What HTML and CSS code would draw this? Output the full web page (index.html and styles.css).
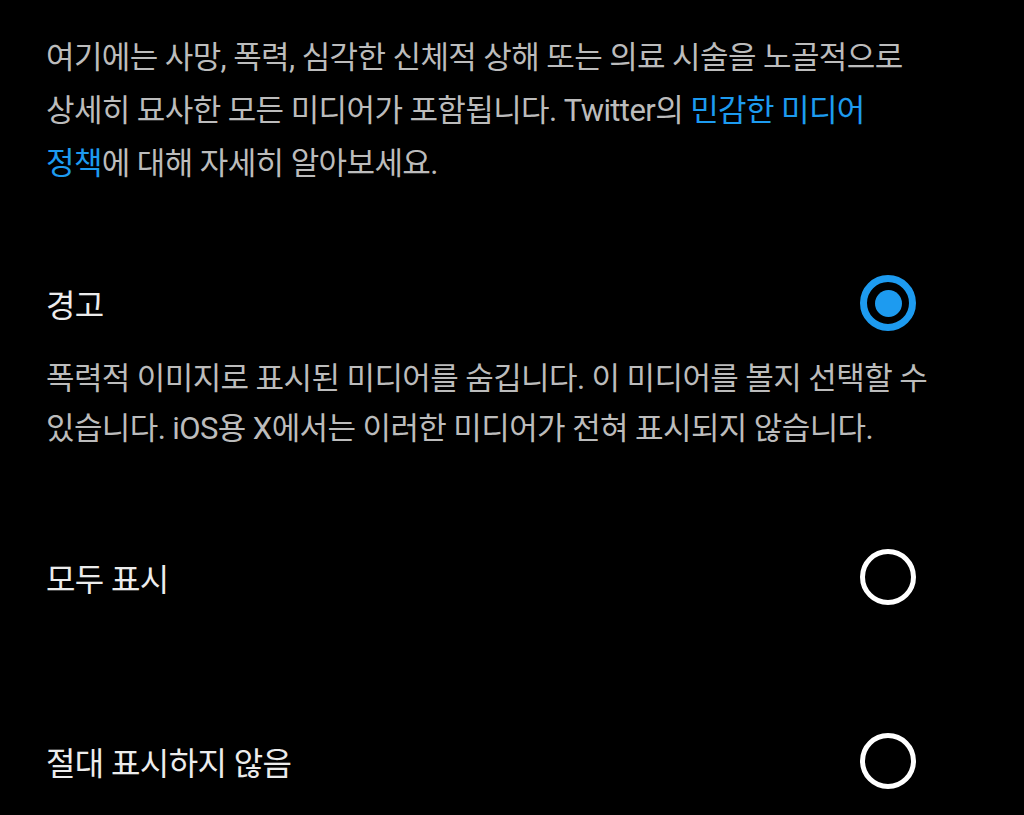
FILE: index.html
```
<!DOCTYPE html>
<html lang="ko">
<head>
<meta charset="utf-8">
<link rel="stylesheet" href="styles.css">
</head>
<body>
<main class="page">
  <p class="intro">여기에는 사망, 폭력, 심각한 신체적 상해 또는 의료 시술을 노골적으로 상세히 묘사한 모든 미디어가 포함됩니다. Twitter의 <a class="link" href="#">민감한 미디어 정책</a>에 대해 자세히 알아보세요.</p>

  <div class="option option-first">
    <div class="row">
      <span class="title">경고</span>
      <span class="radio radio-on"></span>
    </div>
    <p class="desc">폭력적 이미지로 표시된 미디어를 숨깁니다. 이 미디어를 볼지 선택할 수 있습니다. iOS용 X에서는 이러한 미디어가 전혀 표시되지 않습니다.</p>
  </div>

  <div class="option option-second">
    <div class="row">
      <span class="title">모두 표시</span>
      <span class="radio"></span>
    </div>
  </div>

  <div class="option option-third">
    <div class="row">
      <span class="title">절대 표시하지 않음</span>
      <span class="radio"></span>
    </div>
  </div>
</main>
</body>
</html>
```

FILE: styles.css
```
html, body {
  margin: 0;
  padding: 0;
  background: #000;
}
body {
  font-family: Roboto, "Noto Sans CJK KR", sans-serif;
  font-size: 31px;
  letter-spacing: -0.6px;
  color: #bcbcbc;
  height: 815px;
  overflow: hidden;
  word-break: keep-all;
}
.page {
  padding: 31px 78px 0 46px;
}
.intro {
  margin: 0;
  width: 900px;
  line-height: 53px;
}
.link {
  color: #1d9bf0;
  text-decoration: none;
}
.option {
  width: 870px;
}
.option-first { margin-top: 85px; }
.option-second { margin-top: 95px; }
.option-third { margin-top: 128px; }
.row {
  display: flex;
  align-items: center;
  justify-content: space-between;
  height: 56px;
}
.title {
  color: #ececec;
  font-size: 32px;
}
.radio {
  box-sizing: border-box;
  width: 56px;
  height: 56px;
  border-radius: 50%;
  border: 5px solid #fff;
  display: flex;
  align-items: center;
  justify-content: center;
}
.radio-on {
  border: 7px solid #1d9bf0;
}
.radio-on::after {
  content: "";
  width: 27px;
  height: 27px;
  border-radius: 50%;
  background: #1d9bf0;
}
.desc {
  margin: 23px 0 0 0;
  width: 900px;
  line-height: 50px;
}
```
